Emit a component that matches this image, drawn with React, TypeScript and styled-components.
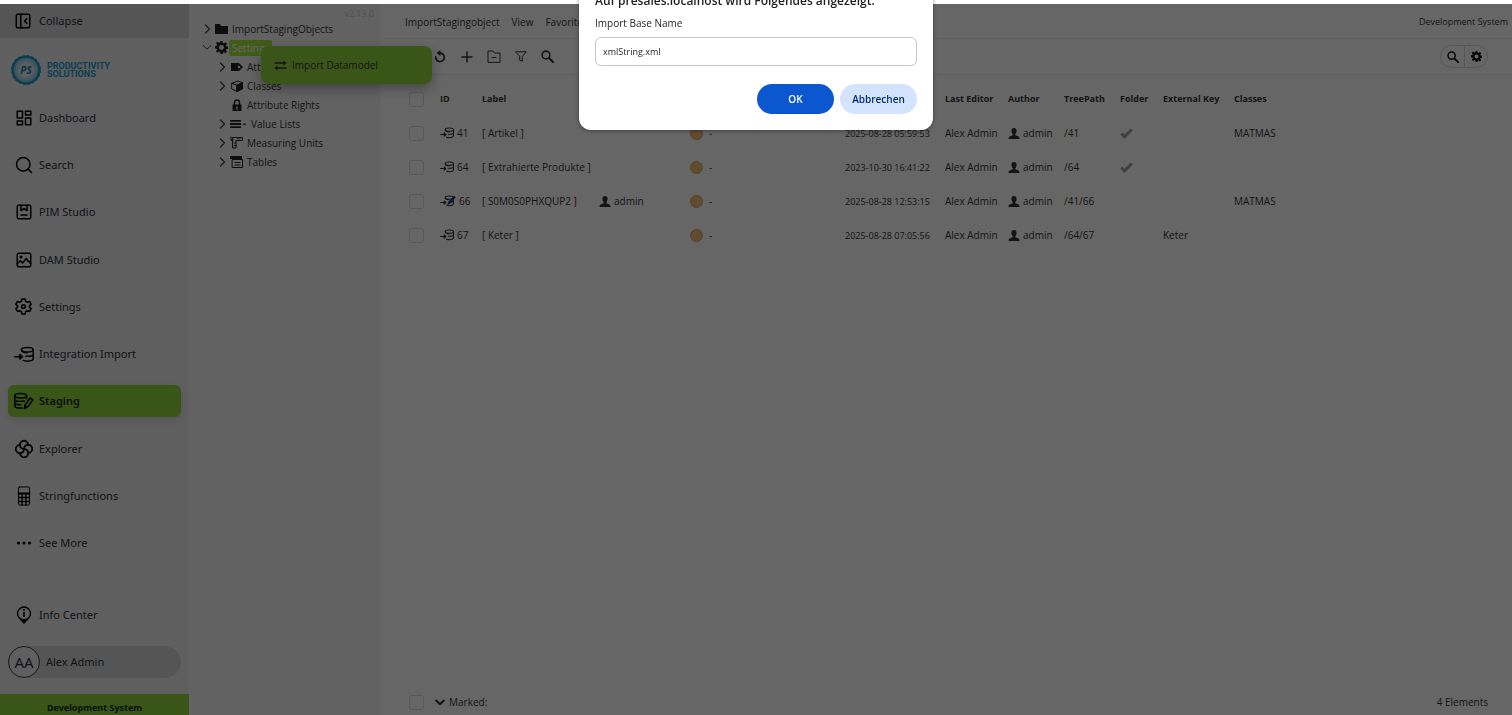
import React, { ReactNode } from 'react';
import styled, { createGlobalStyle, css } from 'styled-components';

const GlobalStyle = createGlobalStyle`
  *, *::before, *::after { box-sizing: border-box; }
  body {
    margin: 0;
    background: #fff;
    color: #333;
    font-family: "Open Sans", "Noto Sans", sans-serif;
    font-size: 10px;
    line-height: 16px;
  }
  button, input { font: inherit; color: inherit; }
  button { border: 0; padding: 0; background: none; cursor: pointer; }
  a { color: inherit; text-decoration: none; }
  svg { display: block; flex: none; }
`;

/* ---------- icons ---------- */

type IconProps = { w?: number; h?: number; box?: string; stroke?: number; fill?: string; color?: string; children: ReactNode };
const Icon = ({ w = 20, h, box = '0 0 24 24', stroke = 2, fill = 'none', color = 'currentColor', children }: IconProps) => (
  <svg width={w} height={h ?? w} viewBox={box} fill={fill} stroke={stroke ? color : 'none'} strokeWidth={stroke}
    strokeLinecap="round" strokeLinejoin="round" aria-hidden="true">{children}</svg>
);

const CollapseIcon = () => (
  <Icon w={18}><rect x="3" y="3" width="18" height="18" rx="2" /><path d="M9 3v18M17 9l-3 3 3 3" /></Icon>
);
const DashboardIcon = () => (
  <Icon w={18}><path d="M3 3h7v9H3zM14 3h7v5h-7zM14 12h7v9h-7zM3 16h7v5H3z" /></Icon>
);
const SearchIcon = () => (
  <Icon w={18} stroke={2}><circle cx="11" cy="11" r="9" /><path d="M22 22l-4.500-4.500" /></Icon>
);
const PimIcon = () => (
  <Icon w={18}><rect x="3" y="3" width="18" height="18" rx="2" /><path d="M8 3v7l4-2.500 4 2.500V3M8 16h8" /></Icon>
);
const DamIcon = () => (
  <Icon w={18}><rect x="3" y="3" width="18" height="18" rx="2" /><circle cx="8" cy="8" r="1" /><path d="M3 17l4-4 3 3 5-6 3 4h1l2 3" /></Icon>
);
const SettingsIcon = () => (
  <Icon w={19} stroke={2}>
    <path d="M10 2.500h4l.7 3 2.100 1.200 2.900-.9 2 3.400-2.200 2.100v1.400l2.200 2.100-2 3.400-2.900-.9-2.100 1.200-.7 3h-4l-.7-3-2.100-1.200-2.900.9-2-3.400 2.200-2.100v-1.400L2.300 9.200l2-3.400 2.900.9 2.100-1.200z" />
    <circle cx="12" cy="12" r="2.300" />
  </Icon>
);
const dbShape = (
  <>
    <ellipse cx="18" cy="5" rx="8" ry="3" />
    <path d="M26 5v12c0 2-3.500 3.500-8 3.500-2 0-4-.4-5.500-1M26 11c0 1.800-3.500 3-8 3h-2M10 5c.2 3.200 3.500 4 8 4" />
    <path d="M1 14.500h9M8 11.500l3.500 3L8 17.500z" fill="currentColor" />
  </>
);
const ImportDbIcon = () => <Icon w={20} h={17} box="0 0 27 23" stroke={2}>{dbShape}</Icon>;
const SmallDbIcon = ({ edited }: { edited?: boolean }) => (
  <Icon w={edited ? 16 : 14} h={12} box={edited ? '0 0 31 23' : '0 0 27 23'} stroke={2}>
    {dbShape}
    {edited && <path d="M15 18l2-5L27 2l3 2-10 12z" fill="#1c2a9a" stroke="#1c2a9a" strokeWidth="1" />}
  </Icon>
);
const StagingIcon = () => (
  <Icon w={20} h={18} box="0 0 27 24" stroke={2}>
    <ellipse cx="9" cy="5" rx="8" ry="3" />
    <path d="M1 5v13c0 2 3.500 3.500 8 3.500l2-.1M17 5v4M1 9.500c0 1.800 3.500 3 8 3 2 0 3.500-.2 5-.6M1 14c0 1.800 3.500 3 8 3" />
    <path d="M14 22l1-5 7-9 3.500 2.500-7 9.500z" /><path d="M14 22l1-4 2 2z" fill="currentColor" />
  </Icon>
);
const ExplorerIcon = () => (
  <Icon w={20} stroke={2}>
    <path d="M16.900 7.300a5 5 0 1 0-9.300 2.300Q9 12 12 12" />
    <path d="M16.700 16.900a5 5 0 1 0-2.300-9.300Q12 9 12 12" />
    <path d="M7.100 16.700a5 5 0 1 0 9.300-2.300Q15 12 12 12" />
    <path d="M7.300 7.100a5 5 0 1 0 2.300 9.300Q12 15 12 12" />
  </Icon>
);
const CalculatorIcon = () => (
  <Icon w={14} h={20} box="0 0 14 20" stroke={1}>
    <rect x="1.500" y="1" width="11" height="18" rx="1" />
    <path d="M1.500 11.500h11M1.500 15.500h11M5 7.500V19M9 7.500V19" strokeWidth="1.300" />
    <path d="M1.500 7.500h11" strokeWidth="2" />
  </Icon>
);
const DotsIcon = () => (
  <Icon w={16} h={6} box="0 0 16 6" stroke={0} fill="currentColor"><circle cx="2.500" cy="3" r="1.600" /><circle cx="8" cy="3" r="1.600" /><circle cx="13.500" cy="3" r="1.600" /></Icon>
);
const InfoIcon = () => (
  <Icon w={16} h={18} box="0 0 16 18" stroke={0} fill="currentColor">
    <circle cx="8" cy="7.500" r="6.500" fill="none" stroke="currentColor" strokeWidth="1.400" />
    <path d="M3 12.500q5 3 10 0L8 18z" /><rect x="7.200" y="6" width="1.600" height="5" /><circle cx="8" cy="4" r="1" />
  </Icon>
);
const ChevronRight = () => <Icon w={7} h={10} box="0 0 7 10" stroke={1}><path d="M1.500 1l4 4-4 4" strokeWidth="1.300" /></Icon>;
const ChevronDown = ({ bold }: { bold?: boolean }) => (
  <Icon w={10} h={7} box="0 0 10 7" stroke={bold ? 2 : 1}><path d="M1.200 1.500L5 5.200l3.800-3.700" /></Icon>
);
const FolderIcon = () => <Icon w={13} h={12} box="0 0 13 12" stroke={0} fill="currentColor"><path d="M0 1h5l1 2h7v8H0z" /></Icon>;
const GearIcon = ({ size = 12 }: { size?: number }) => (
  <Icon w={size} box="0 0 24 24" stroke={0} fill="currentColor">
    <path fillRule="evenodd" d="M10 0h4l.6 3.500 2 .8 2.900-2.100 2.800 2.800-2.100 2.900.8 2 3 .6v4l-3 .6-.8 2 2.100 2.900-2.800 2.800-2.900-2.100-2 .8L14 24h-4l-.6-3.500-2-.8-2.900 2.100L1.700 19l2.100-2.900-.8-2-3-.6v-4l3-.6.8-2L1.700 4l2.800-2.800 2.900 2.100 2-.8zM12 7.500a4.500 4.500 0 1 0 0 9 4.500 4.500 0 0 0 0-9z" />
  </Icon>
);
const TagIcon = () => (
  <Icon w={12} h={10} box="0 0 12 10" stroke={0} fill="currentColor"><path fillRule="evenodd" d="M0 1h8l4 4-4 4H0zM8 3.700a1.300 1.300 0 1 0 0 2.600 1.300 1.300 0 0 0 0-2.600z" /></Icon>
);
const CubeIcon = () => (
  <Icon w={12} box="0 0 12 12" stroke={1}><path d="M1 3.200L7 1l4.500 1.700v6L6 11.500 1 9z" /><path d="M1 3.200l5 2 5.500-2.500" /><path d="M6 5.200l5.500-2.500v6L6 11.500z" fill="currentColor" /></Icon>
);
const LockIcon = () => (
  <Icon w={10} h={12} box="0 0 10 12" stroke={0} fill="currentColor"><path d="M2.500 6V3.500a2.500 2.500 0 0 1 5 0V6" fill="none" stroke="currentColor" strokeWidth="1.500" /><path fillRule="evenodd" d="M.5 5.500h9V12h-9zM5 7.500a1 1 0 0 0-.5 1.800V11h1V9.300A1 1 0 0 0 5 7.500z" /></Icon>
);
const ListIcon = () => (
  <Icon w={17} h={10} box="0 0 17 10" stroke={0} fill="currentColor"><path d="M0 1h11v1.800H0zM0 4.100h11v1.800H0zM0 7.200h11V9H0zM12.500 6l2-2 2 2z" /></Icon>
);
const RulerIcon = () => (
  <Icon w={13} h={13} box="0 0 13 13" stroke={1}><path d="M3 1.500h9.500v3H6V12H3zM1 1v3h2M1 4l2 2M8 1.500V3M10 1.500V3M6 7H4.500M6 9.500H4.500" /></Icon>
);
const TableIcon = () => (
  <Icon w={13} h={12} box="0 0 13 12" stroke={1}><path d="M2.500 3.500h10v8h-10zM5 6.500h5M5 9h5" /><path d="M0 0h12v3H0z" fill="currentColor" stroke="none" /></Icon>
);
const TransferIcon = () => (
  <Icon w={13} h={11} box="0 0 13 11" stroke={1}><path d="M1 3h10M1.500 8H12" strokeWidth="1.400" /><path d="M9.500 .5L12.500 3l-3 2.500zM3.500 5.500L.5 8l3 2.500z" fill="currentColor" stroke="none" /></Icon>
);
const RefreshIcon = () => (
  <Icon w={12} h={13} box="0 0 12 13" stroke={1}><path d="M1.700 7a4.300 4.300 0 1 0 4.300-4" strokeWidth="1.800" /><path d="M6.500 0v6L2.500 3z" fill="currentColor" stroke="none" /></Icon>
);
const PlusIcon = () => <Icon w={12} box="0 0 12 12" stroke={1}><path d="M6 1v10M1 6h10" strokeWidth="1.500" /></Icon>;
const FolderMinusIcon = () => <Icon w={14} h={13} box="0 0 14 13" stroke={1}><path d="M1 12V1h5l1.500 2H13v9zM5 7.500h4" /></Icon>;
const FilterIcon = () => <Icon w={12} h={11} box="0 0 12 11" stroke={1}><path d="M.8 .8h10.400L7.300 5.500v4.700l-2.600-1V5.500z" /></Icon>;
const LensIcon = ({ size = 13 }: { size?: number }) => (
  <Icon w={size} box="0 0 13 13" stroke={2}><circle cx="5" cy="5" r="3.900" strokeWidth="1.600" /><path d="M8.200 8.200L12 12" /></Icon>
);
const PersonIcon = () => (
  <Icon w={12} h={11} box="0 0 12 11" stroke={0} fill="currentColor"><path d="M6 0c1.700 0 2.600 1.100 2.600 2.800C8.600 4.500 8 5.600 7.300 6.200v1c1.500.6 3.700 1 4 2.300L11.500 11H.5l.2-1.500c.3-1.300 2.500-1.700 4-2.300v-1C4 5.600 3.400 4.500 3.400 2.800 3.400 1.100 4.300 0 6 0z" /></Icon>
);
const CheckIcon = () => <Icon w={13} h={11} box="0 0 13 11" stroke={3} color="#a0a0a0"><path d="M1.300 5.500L4.500 8.800 11.800 1.500" strokeLinecap="butt" strokeLinejoin="miter" /></Icon>;

const Badge = () => (
  <svg width="30" height="30" viewBox="0 0 30 30" aria-hidden="true">
    <defs>
      <radialGradient id="seal"><stop offset="0.450" stopColor="#e4eff3" /><stop offset="0.800" stopColor="#9fd3e8" /><stop offset="1" stopColor="#27a3d6" /></radialGradient>
    </defs>
    <circle cx="15" cy="15" r="13.500" fill="url(#seal)" stroke="#0b93cf" strokeWidth="1.600" />
    <circle cx="15" cy="15" r="14.300" fill="none" stroke="#0b93cf" strokeWidth="1.200" strokeDasharray="3 1.500" />
    <text x="15" y="18.500" textAnchor="middle" fontFamily="Open Sans" fontSize="10" fontWeight="700" fontStyle="italic" fill="#1d7ba6">PS</text>
  </svg>
);

/* ---------- shell ---------- */

const Shell = styled.div`
  display: flex;
  min-height: 100vh;
  padding-top: 4px;
`;

const Backdrop = styled.div`
  position: fixed;
  inset: 4px 0 0 0;
  background: rgba(0, 0, 0, 0.6);
  z-index: 5;
`;

const Sidebar = styled.aside`
  display: flex;
  flex-direction: column;
  flex: 0 0 189px;
  background: #eeeeee;
  color: #2b3038;
  font-family: "Noto Sans", "Open Sans", sans-serif;
  font-size: 11px;
`;

const CollapseButton = styled.button`
  display: flex;
  align-items: center;
  gap: 7px;
  height: 34px;
  padding-left: 14px;
  background: #d5d5d5;
  svg { color: #000; }
`;

const Brand = styled.div`
  display: flex;
  align-items: center;
  gap: 6px;
  padding: 17px 11px;
  color: #1198d0;
  font-family: Roboto, "Noto Sans", sans-serif;
  font-size: 9px;
  font-weight: 700;
  line-height: 8px;
`;

const Nav = styled.nav`
  display: flex;
  flex: 1;
  flex-direction: column;
  justify-content: space-between;
  padding: 0 8px 40px;
`;

const NavLink = styled.a<{ $active?: boolean }>`
  display: flex;
  align-items: center;
  height: 32px;
  border-radius: 6px;
  ${p => p.$active && css`
    background: #91d43c;
    color: #1c2a10;
    font-weight: 600;
    box-shadow: 0 3px 8px rgba(0, 0, 0, 0.12);
  `}
`;

const NavIcon = styled.span`
  display: flex;
  justify-content: center;
  width: 31px;
  color: #000;
`;

const SideFooter = styled.div`
  display: flex;
  flex-direction: column;
  gap: 15px;
  padding: 0 8px 16px;
`;

const UserLink = styled.a`
  display: flex;
  align-items: center;
  gap: 6px;
  height: 32px;
  border-radius: 16px;
  background: #d5d5d5;
`;

const Avatar = styled.span`
  display: flex;
  align-items: center;
  justify-content: center;
  width: 32px;
  height: 32px;
  border: 1px solid #444;
  border-radius: 50%;
  background: #eeeeee;
  font-size: 15px;
`;

const SystemBar = styled.div`
  height: 21px;
  padding-top: 6px;
  background: #91d43c;
  color: #1c2a10;
  font-size: 9px;
  font-weight: 700;
  text-align: center;
`;

/* ---------- tree ---------- */

const TreePane = styled.section`
  flex: 0 0 192px;
  background: #f4f4f4;
  border-right: 1px solid #fafafa;
`;

const Version = styled.div`
  height: 15px;
  padding: 2px 6px 0;
  color: #c8c8c8;
  font-size: 9px;
  text-align: right;
`;

const TreeList = styled.ul`
  margin: 0;
  padding: 0;
  list-style: none;
`;

const TreeRow = styled.li<{ $level: number }>`
  display: flex;
  align-items: center;
  height: 19px;
  padding-left: ${p => (p.$level ? 28 : 13)}px;
`;

const Toggle = styled.button`
  display: flex;
  justify-content: center;
  width: 10px;
  margin-right: 3px;
  color: #444;
`;

const TreeIcon = styled.span`
  display: flex;
  justify-content: center;
  min-width: 13px;
  color: #222;
`;

const TreeLabel = styled.a<{ $selected?: boolean }>`
  margin-left: 1px;
  padding: 0 3px;
  border-radius: 2px;
  ${p => p.$selected && css`
    background: #a2e53c;
    color: #fff;
  `}
`;

const ContextMenu = styled.div`
  position: absolute;
  top: 46px;
  left: 261px;
  z-index: 3;
  width: 171px;
  padding: 8px 0;
  border-radius: 8px;
  background: #91d43c;
  box-shadow: 0 5px 12px rgba(0, 0, 0, 0.3);
`;

const ContextItem = styled.button`
  display: flex;
  align-items: center;
  gap: 5px;
  width: 100%;
  height: 22px;
  padding-left: 13px;
`;

/* ---------- main ---------- */

const Main = styled.main`
  display: flex;
  flex: 1;
  flex-direction: column;
  min-width: 0;
  background: #fff;
`;

const MenuBar = styled.header`
  display: flex;
  align-items: center;
  gap: 12px;
  height: 35px;
  padding: 2px 4px 0 24px;
  border-bottom: 1px solid #f0f0f0;
`;

const SystemName = styled.span`
  margin-left: auto;
  font-size: 9px;
`;

const Toolbar = styled.div`
  display: flex;
  align-items: center;
  gap: 8px;
  height: 36px;
  padding: 0 24px 0 49px;
  border-bottom: 1px solid #f0f0f0;
`;

const ToolButton = styled.button`
  display: flex;
  align-items: center;
  justify-content: center;
  width: 19px;
  height: 19px;
`;

const ToolGroup = styled.div`
  display: flex;
  margin-left: auto;
  border: 1px solid #dadada;
  border-radius: 12px;
  button + button { border-left: 1px solid #dadada; }
`;

const GroupButton = styled.button`
  display: flex;
  align-items: center;
  justify-content: center;
  width: 23px;
  height: 21px;
  color: #111;
`;

const DataTable = styled.table`
  width: 100%;
  margin-top: 7px;
  border-collapse: collapse;
  table-layout: fixed;
  th, td {
    height: 34px;
    padding: 0;
    text-align: left;
    vertical-align: middle;
    white-space: nowrap;
  }
  th { font-size: 9px; font-weight: 700; }
`;

const CheckBox = styled.input.attrs({ type: 'checkbox' })`
  display: block;
  appearance: none;
  width: 15px;
  height: 15px;
  margin: 0 0 0 28px;
  border: 1px solid #dcdcdc;
  border-radius: 3px;
`;

const Inline = styled.span`
  display: flex;
  align-items: center;
  gap: 3px;
`;

const Status = styled.span`
  display: flex;
  align-items: center;
  gap: 6px;
  &::before {
    content: "";
    width: 13px;
    height: 13px;
    border: 1px solid #d6a35c;
    border-radius: 50%;
    background: #f4bf7c;
  }
`;

const DateText = styled.time`
  font-size: 9px;
`;

const FooterBar = styled.footer`
  display: flex;
  align-items: center;
  height: 26px;
  margin-top: auto;
  padding-right: 24px;
`;

const MarkedButton = styled.button`
  display: flex;
  align-items: center;
  gap: 4px;
  margin-left: 11px;
`;

const Count = styled.span`
  margin-left: auto;
`;

/* ---------- prompt ---------- */

const Prompt = styled.form`
  position: fixed;
  top: -23px;
  left: 50%;
  transform: translateX(-50%);
  z-index: 6;
  width: 354px;
  padding: 16px;
  border-radius: 12px;
  background: #fff;
  color: #1f1f1f;
  box-shadow: 0 1px 4px rgba(0, 0, 0, 0.4);
`;

const PromptTitle = styled.h1`
  margin: 0;
  font-size: 12px;
  font-weight: 600;
  line-height: 16px;
`;

const PromptLabel = styled.label`
  display: block;
  margin: 6px 0;
`;

const PromptInput = styled.input`
  display: block;
  width: 100%;
  height: 29px;
  padding: 0 7px;
  border: 1px solid #c7c7c7;
  border-radius: 6px;
  background: #fff;
  font-size: 9px;
`;

const PromptActions = styled.div`
  display: flex;
  justify-content: flex-end;
  gap: 6px;
  margin-top: 18px;
`;

const PromptButton = styled.button<{ $primary?: boolean }>`
  width: 77px;
  height: 30px;
  border-radius: 15px;
  background: ${p => (p.$primary ? '#0b57d0' : '#d3e3fd')};
  color: ${p => (p.$primary ? '#fff' : '#062e6f')};
  font-weight: 600;
`;

/* ---------- data ---------- */

const navItems: { label: string; icon: ReactNode; active?: boolean }[] = [
  { label: 'Dashboard', icon: <DashboardIcon /> },
  { label: 'Search', icon: <SearchIcon /> },
  { label: 'PIM Studio', icon: <PimIcon /> },
  { label: 'DAM Studio', icon: <DamIcon /> },
  { label: 'Settings', icon: <SettingsIcon /> },
  { label: 'Integration Import', icon: <ImportDbIcon /> },
  { label: 'Staging', icon: <StagingIcon />, active: true },
  { label: 'Explorer', icon: <ExplorerIcon /> },
  { label: 'Stringfunctions', icon: <CalculatorIcon /> },
  { label: 'See More', icon: <DotsIcon /> },
];

const treeItems: { label: string; icon: ReactNode; level: number; open?: boolean; leaf?: boolean }[] = [
  { label: 'ImportStagingObjects', icon: <FolderIcon />, level: 0 },
  { label: 'Settings', icon: <GearIcon size={13} />, level: 0, open: true },
  { label: 'Attributes', icon: <TagIcon />, level: 1 },
  { label: 'Classes', icon: <CubeIcon />, level: 1 },
  { label: 'Attribute Rights', icon: <LockIcon />, level: 1, leaf: true },
  { label: 'Value Lists', icon: <ListIcon />, level: 1 },
  { label: 'Measuring Units', icon: <RulerIcon />, level: 1 },
  { label: 'Tables', icon: <TableIcon />, level: 1 },
];

const columns: [string, number?][] = [
  ['', 59], ['ID', 42], ['Label', 117], ['', 91], ['', 155], ['', 100], ['Last Editor', 63], ['Author', 56],
  ['TreePath', 56], ['Folder', 43], ['External Key', 71], ['Classes'],
];

const rows = [
  { id: '41', label: 'Artikel', date: '2025-08-28 05:59:53', path: '/41', folder: true, key: '', cls: 'MATMAS' },
  { id: '64', label: 'Extrahierte Produkte', date: '2023-10-30 16:41:22', path: '/64', folder: true, key: '', cls: '' },
  { id: '66', label: 'S0M0S0PHXQUP2', user: 'admin', date: '2025-08-28 12:53:15', path: '/41/66', key: '', cls: 'MATMAS' },
  { id: '67', label: 'Keter', date: '2025-08-28 07:05:56', path: '/64/67', key: 'Keter', cls: '' },
];

export default function App() {
  return (
    <>
      <GlobalStyle />
      <Shell>
        <Sidebar>
          <CollapseButton type="button"><CollapseIcon />Collapse</CollapseButton>
          <Brand><Badge /><span>PRODUCTIVITY<br />SOLUTIONS</span></Brand>
          <Nav>
            {navItems.map(n => (
              <NavLink key={n.label} href="#" $active={n.active}><NavIcon>{n.icon}</NavIcon>{n.label}</NavLink>
            ))}
          </Nav>
          <SideFooter>
            <NavLink href="#"><NavIcon><InfoIcon /></NavIcon>Info Center</NavLink>
            <UserLink href="#"><Avatar>AA</Avatar>Alex Admin</UserLink>
          </SideFooter>
          <SystemBar>Development System</SystemBar>
        </Sidebar>

        <TreePane>
          <Version>v2.13.0</Version>
          <TreeList>
            {treeItems.map(t => (
              <TreeRow key={t.label} $level={t.level}>
                <Toggle type="button" aria-label={`Toggle ${t.label}`} disabled={t.leaf}>
                  {!t.leaf && (t.open ? <ChevronDown /> : <ChevronRight />)}
                </Toggle>
                <TreeIcon>{t.icon}</TreeIcon>
                <TreeLabel href="#" $selected={t.open}>{t.label}</TreeLabel>
              </TreeRow>
            ))}
          </TreeList>
        </TreePane>

        <Main>
          <MenuBar>
            <a href="#">ImportStagingobject</a>
            <a href="#">View</a>
            <a href="#">Favorites</a>
            <SystemName>Development System</SystemName>
          </MenuBar>
          <Toolbar>
            <ToolButton type="button" aria-label="Refresh"><RefreshIcon /></ToolButton>
            <ToolButton type="button" aria-label="Add"><PlusIcon /></ToolButton>
            <ToolButton type="button" aria-label="Collapse folder"><FolderMinusIcon /></ToolButton>
            <ToolButton type="button" aria-label="Filter"><FilterIcon /></ToolButton>
            <ToolButton type="button" aria-label="Search"><LensIcon /></ToolButton>
            <ToolGroup>
              <GroupButton type="button" aria-label="Quick search"><LensIcon size={12} /></GroupButton>
              <GroupButton type="button" aria-label="Options"><GearIcon size={11} /></GroupButton>
            </ToolGroup>
          </Toolbar>
          <DataTable>
            <colgroup>{columns.map(([, w], i) => <col key={i} width={w} />)}</colgroup>
            <thead>
              <tr>
                {columns.map(([name], i) => (
                  <th key={i}>{i === 0 ? <CheckBox aria-label="Select all" /> : name}</th>
                ))}
              </tr>
            </thead>
            <tbody>
              {rows.map(r => (
                <tr key={r.id}>
                  <td><CheckBox aria-label={`Select ${r.id}`} /></td>
                  <td><Inline><SmallDbIcon edited={!!r.user} />{r.id}</Inline></td>
                  <td>[ {r.label} ]</td>
                  <td>{r.user && <Inline><PersonIcon />{r.user}</Inline>}</td>
                  <td><Status>-</Status></td>
                  <td><DateText>{r.date}</DateText></td>
                  <td>Alex Admin</td>
                  <td><Inline><PersonIcon />admin</Inline></td>
                  <td>{r.path}</td>
                  <td>{r.folder && <CheckIcon />}</td>
                  <td>{r.key}</td>
                  <td>{r.cls}</td>
                </tr>
              ))}
            </tbody>
          </DataTable>
          <FooterBar>
            <CheckBox aria-label="Select marked" />
            <MarkedButton type="button"><ChevronDown bold />Marked:</MarkedButton>
            <Count>4 Elements</Count>
          </FooterBar>
        </Main>
      </Shell>

      <ContextMenu>
        <ContextItem type="button"><TransferIcon />Import Datamodel</ContextItem>
      </ContextMenu>

      <Backdrop />

      <Prompt>
        <PromptTitle>Auf presales.localhost wird Folgendes angezeigt:</PromptTitle>
        <PromptLabel htmlFor="base-name">Import Base Name</PromptLabel>
        <PromptInput id="base-name" defaultValue="xmlString.xml" />
        <PromptActions>
          <PromptButton type="button" $primary>OK</PromptButton>
          <PromptButton type="button">Abbrechen</PromptButton>
        </PromptActions>
      </Prompt>
    </>
  );
}
